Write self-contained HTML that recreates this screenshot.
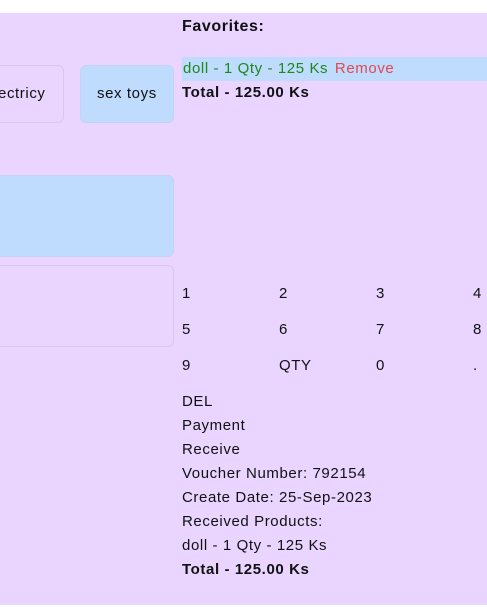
<!DOCTYPE html>
<html><head><style>
body{margin:0;width:487px;height:610px;background:#fff;font-family:"Liberation Sans",sans-serif;font-size:15px;color:#111;position:relative;overflow:hidden;letter-spacing:0.6px}
.bg{position:absolute;left:0;top:13px;width:487px;height:592px;background:#e9d5ff}
.a{position:absolute;white-space:nowrap;line-height:20px}
.box{position:absolute;border:1px solid #d8c8ee;border-radius:6px;box-sizing:border-box}
b{font-weight:bold}
</style></head><body>
<div class="bg"></div>
<div class="box" style="left:-20px;top:65px;width:84px;height:58px;"></div>
<div class="a" style="left:-2px;top:84px">ectricy</div>
<div class="box" style="left:80px;top:65px;width:94px;height:58px;background:#bfdbfe;border-color:#c5d3f3"></div>
<div class="a" style="left:97px;top:84px">sex toys</div>
<div class="box" style="left:-20px;top:175px;width:194px;height:82px;background:#bfdbfe;border-color:#c5d3f3"></div>
<div class="box" style="left:-20px;top:265px;width:194px;height:82px;"></div>
<div class="a" style="left:182px;top:17px;font-weight:bold;font-size:16px">Favorites:</div>
<div style="position:absolute;left:182px;top:57px;width:305px;height:24px;background:#bfdbfe"></div>
<div class="a" style="left:183px;top:59px;color:#1a8a1a">doll - 1 Qty - 125 Ks <span style="color:#e5484d;margin-left:2px">Remove</span></div>
<div class="a" style="left:182px;top:83px;font-weight:bold">Total - 125.00 Ks</div>
<div class="a" style="left:182px;top:284px">1</div><div class="a" style="left:279px;top:284px">2</div><div class="a" style="left:376px;top:284px">3</div><div class="a" style="left:473px;top:284px">4</div>
<div class="a" style="left:182px;top:320px">5</div><div class="a" style="left:279px;top:320px">6</div><div class="a" style="left:376px;top:320px">7</div><div class="a" style="left:473px;top:320px">8</div>
<div class="a" style="left:182px;top:356px">9</div><div class="a" style="left:279px;top:356px">QTY</div><div class="a" style="left:376px;top:356px">0</div><div class="a" style="left:473px;top:356px">.</div>
<div class="a" style="left:182px;top:390px;line-height:24px">DEL<br>Payment<br>Receive<br>Voucher Number: 792154<br>Create Date: 25-Sep-2023<br>Received Products:<br>doll - 1 Qty - 125 Ks<br><b>Total - 125.00 Ks</b></div>
</body></html>
